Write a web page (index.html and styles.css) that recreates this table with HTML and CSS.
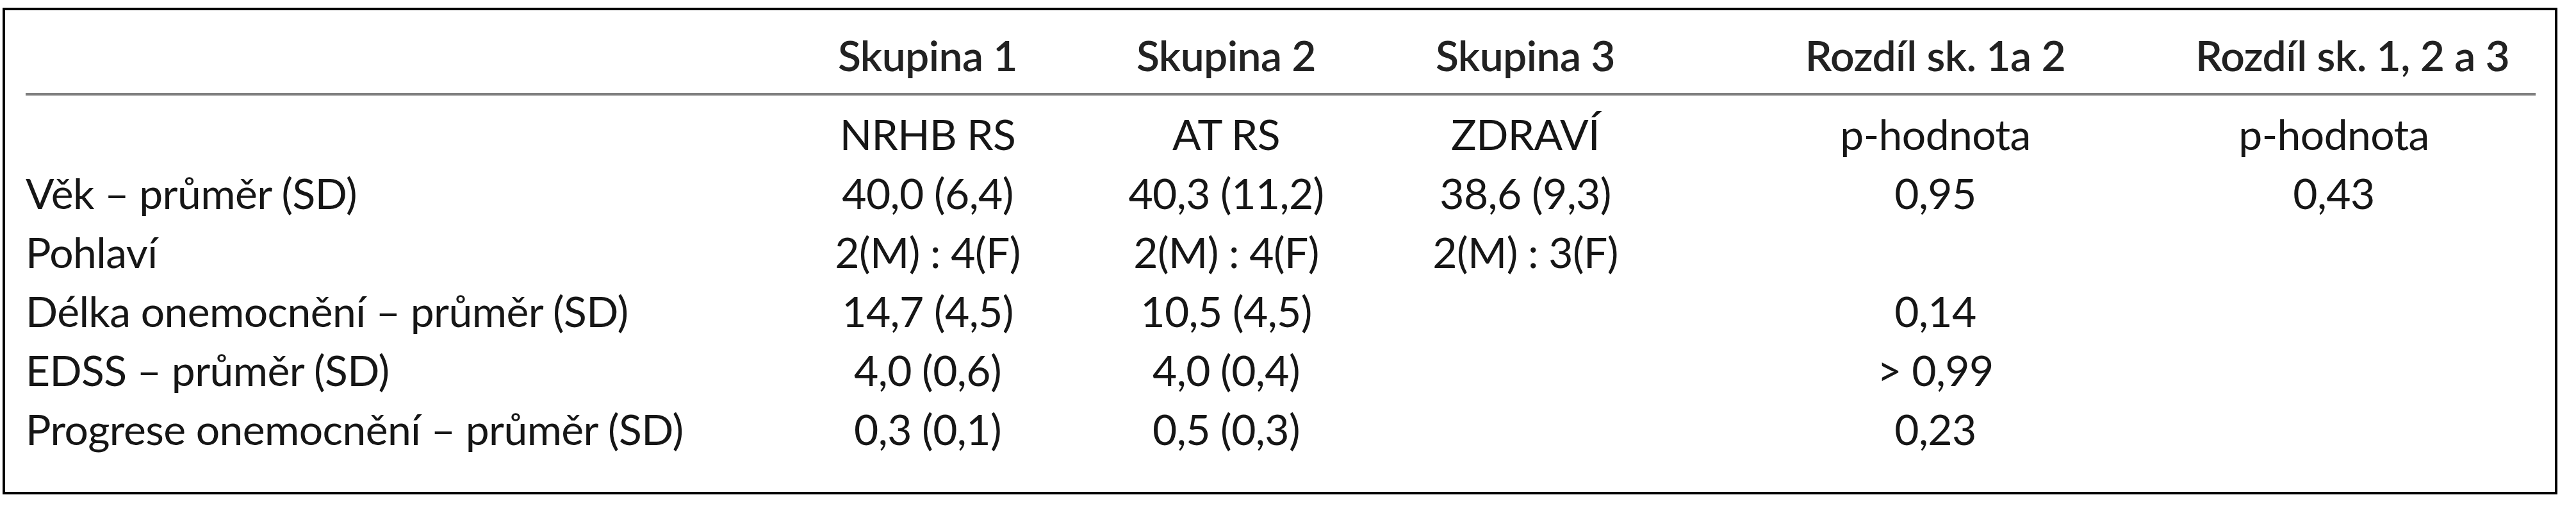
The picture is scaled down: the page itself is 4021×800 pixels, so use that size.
FILE: index.html
```html
<!DOCTYPE html>
<html lang="cs">
<head>
<meta charset="utf-8">
<title>Tabulka</title>
<link rel="stylesheet" href="styles.css">
</head>
<body>
<div class="frame">
  <table class="data">
    <colgroup>
      <col class="c-label">
      <col class="c-g">
      <col class="c-g">
      <col class="c-g3">
      <col class="c-p1">
      <col class="c-p2">
    </colgroup>
    <thead>
      <tr>
        <th class="lbl"></th>
        <th>Skupina 1</th>
        <th>Skupina 2</th>
        <th>Skupina 3</th>
        <th>Rozdíl sk. 1a 2</th>
        <th class="last">Rozdíl sk. 1, 2 a 3</th>
      </tr>
    </thead>
    <tbody>
      <tr class="sub">
        <td class="lbl"></td>
        <td>NRHB RS</td>
        <td>AT RS</td>
        <td>ZDRAVÍ</td>
        <td>p-hodnota</td>
        <td class="last">p-hodnota</td>
      </tr>
      <tr>
        <td class="lbl">Věk – průměr (SD)</td>
        <td>40,0 (6,4)</td>
        <td>40,3 (11,2)</td>
        <td>38,6 (9,3)</td>
        <td>0,95</td>
        <td class="last">0,43</td>
      </tr>
      <tr>
        <td class="lbl">Pohlaví</td>
        <td>2(M) : 4(F)</td>
        <td>2(M) : 4(F)</td>
        <td>2(M) : 3(F)</td>
        <td></td>
        <td class="last"></td>
      </tr>
      <tr>
        <td class="lbl">Délka onemocnění – průměr (SD)</td>
        <td>14,7 (4,5)</td>
        <td>10,5 (4,5)</td>
        <td></td>
        <td>0,14</td>
        <td class="last"></td>
      </tr>
      <tr>
        <td class="lbl">EDSS – průměr (SD)</td>
        <td>4,0 (0,6)</td>
        <td>4,0 (0,4)</td>
        <td></td>
        <td>&gt; 0,99</td>
        <td class="last"></td>
      </tr>
      <tr>
        <td class="lbl">Progrese onemocnění – průměr (SD)</td>
        <td>0,3 (0,1)</td>
        <td>0,5 (0,3)</td>
        <td></td>
        <td>0,23</td>
        <td class="last"></td>
      </tr>
    </tbody>
  </table>
</div>
</body>
</html>
```

FILE: styles.css
```css
html, body {
  margin: 0;
  padding: 0;
  background: #ffffff;
}

body {
  font-family: Lato, "Open Sans", "Liberation Sans", sans-serif;
  color: #161616;
}

.frame {
  box-sizing: border-box;
  margin: 12px 0 0 4px;
  width: 3988px;
  height: 759px;
  border: 4px solid #000;
  padding: 24px 30px 0 32px;
}

.data {
  table-layout: fixed;
  border-collapse: collapse;
  width: 3918px;
  font-size: 66px;
  line-height: 92px;
  letter-spacing: -0.6px;
}

.c-label { width: 1175px; }
.c-g { width: 466px; }
.c-g3 { width: 468px; }
.c-p1 { width: 812px; }
.c-p2 { width: 531px; }

.data th,
.data td {
  padding: 0;
  text-align: center;
  white-space: nowrap;
  vertical-align: baseline;
}

.data th.lbl,
.data td.lbl {
  text-align: left;
}

.data th.last,
.data td.last {
  padding-right: 99px;
}

.data thead th {
  font-weight: 600;
  color: #222;
  padding-bottom: 13px;
  border-bottom: 4px solid #808080;
}

.data tr.sub td {
  padding-top: 14px;
}
```
